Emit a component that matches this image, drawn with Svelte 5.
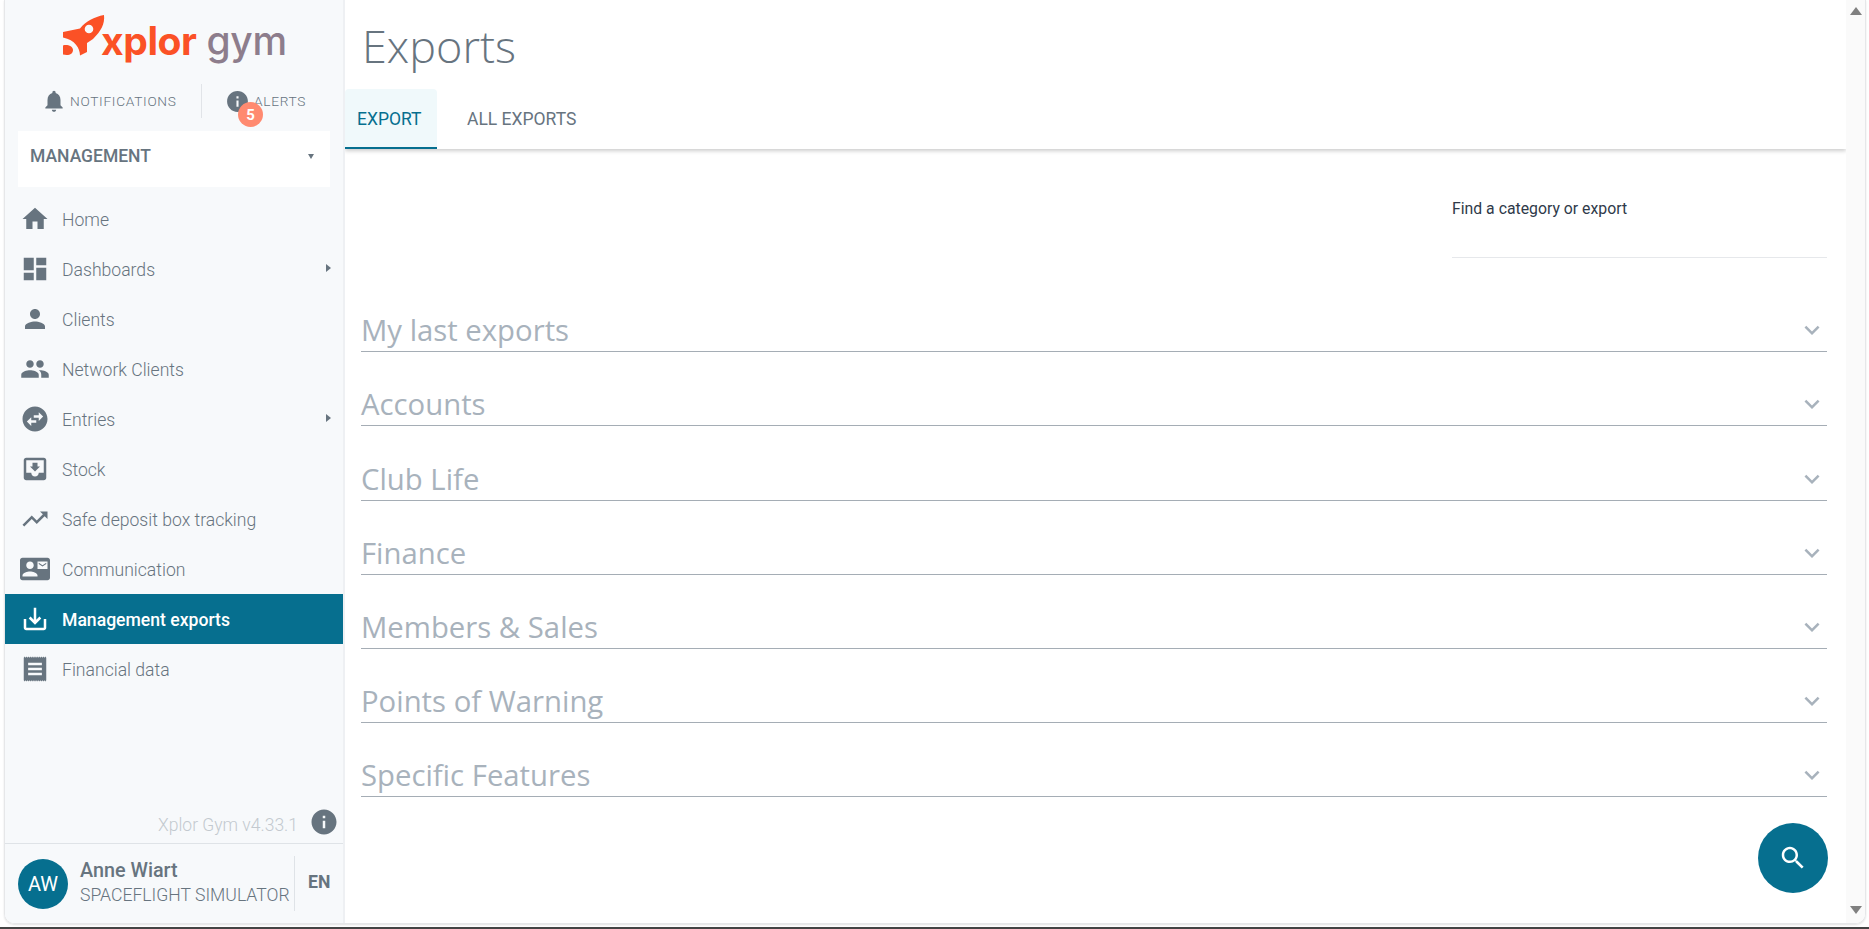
<script>
  let teeth = 'M3 3';
  for (let x = 3; x < 21; x += 1.5) teeth += `L${x + 0.75} 2L${x + 1.5} 3`;
  teeth += 'V21';
  for (let x = 21; x > 3; x -= 1.5) teeth += `L${x - 0.75} 22L${x - 1.5} 21`;
  teeth += 'ZM6.500 7v2h11V7zM6.500 11v2h11v-2zM6.500 15v2h11v-2z';

  const icons = {
    home: 'M10 20v-6h4v6h5v-8h3L12 3 2 12h3v8z',
    dash: 'M3 13h8V3H3v10zm0 8h8v-6H3v6zm10 0h8V11h-8v10zm0-18v6h8V3h-8z',
    person: 'M12 12c2.21 0 4-1.79 4-4s-1.79-4-4-4-4 1.79-4 4 1.79 4 4 4zm0 2c-2.67 0-8 1.34-8 4v2h16v-2c0-2.66-5.33-4-8-4z',
    people: 'M16 11c1.66 0 2.99-1.34 2.99-3S17.66 5 16 5c-1.66 0-3 1.34-3 3s1.34 3 3 3zm-8 0c1.66 0 2.99-1.34 2.99-3S9.66 5 8 5C6.34 5 5 6.34 5 8s1.34 3 3 3zm0 2c-2.33 0-7 1.17-7 3.5V19h14v-2.5c0-2.33-4.67-3.5-7-3.5zm8 0c-.29 0-.62.02-.97.05 1.16.84 1.97 1.97 1.97 3.45V19h6v-2.5c0-2.33-4.67-3.5-7-3.5z',
    swap: 'M22 12c0-5.52-4.48-10-10-10S2 6.48 2 12s4.48 10 10 10 10-4.48 10-10zm-7-5.5l3.5 3.5-3.5 3.5V11h-4V9h4V6.5zm-6 11L5.5 14 9 10.5V13h4v2H9v2.5z',
    inbox: 'M19 3H5c-1.1 0-2 .9-2 2v14c0 1.1.9 2 2 2h14c1.1 0 2-.9 2-2V5c0-1.1-.9-2-2-2zM19 15h-4c0 1.66-1.35 3-3 3s-3-1.34-3-3H5V5h14v10zM16 10h-2V7h-4v3H8l4 4 4-4z',
    trend: 'M16 6l2.29 2.29-4.88 4.88-4-4L2 16.59 3.41 18l6-6 4 4 6.3-6.29L22 12V6z',
    contact: 'M21 8V7l-3 2-3-2v1l3 2 3-2zm1-5H2C.9 3 0 3.9 0 5v14c0 1.1.9 2 2 2h20c1.1 0 1.99-.9 1.99-2L24 5c0-1.1-.9-2-2-2zM8 6c1.66 0 3 1.34 3 3s-1.34 3-3 3-3-1.34-3-3 1.34-3 3-3zm6 12H2v-1c0-2 4-3.1 6-3.1s6 1.1 6 3.1v1zm8-6h-8V6h8v6z',
    save: 'M19 12v7H5v-7H3v7c0 1.1.9 2 2 2h14c1.1 0 2-.9 2-2v-7h-2zm-6 .67l2.59-2.58L17 11.5l-5 5-5-5 1.41-1.41L11 12.67V3h2z',
    receipt: teeth
  };
  const nav = [
    { label: 'Home', icon: 'home' },
    { label: 'Dashboards', icon: 'dash', sub: true },
    { label: 'Clients', icon: 'person' },
    { label: 'Network Clients', icon: 'people' },
    { label: 'Entries', icon: 'swap', sub: true },
    { label: 'Stock', icon: 'inbox' },
    { label: 'Safe deposit box tracking', icon: 'trend' },
    { label: 'Communication', icon: 'contact' },
    { label: 'Management exports', icon: 'save', active: true },
    { label: 'Financial data', icon: 'receipt' }
  ];
  const sections = ['My last exports', 'Accounts', 'Club Life', 'Finance', 'Members & Sales', 'Points of Warning', 'Specific Features'];
  const info = 'M12 2C6.48 2 2 6.48 2 12s4.48 10 10 10 10-4.48 10-10S17.52 2 12 2zm1 15h-2v-6h2v6zm0-8h-2V7h2v2z';
</script>

<div class="window">
  <div class="frame">
    <aside class="side">
      <div class="logo">
        <svg class="rocket" viewBox="0 0 46 46" width="46" height="46" aria-hidden="true">
          <path fill-rule="evenodd" fill="#fb5126" d="M3 20L20 16.500C26 9 34 5 44 3C45 12 41 19 33 27L27 31L27 40L20 43.500C20 36 15 28 3 25.500ZM29 12.700A4.300 4.300 0 1 0 29 21.300A4.300 4.300 0 1 0 29 12.700Z"/>
          <path fill="#fb5126" d="M3 33.400C7 32 13 34 13 38C13 42 9 44 3 42.600Z"/>
        </svg>
        <span class="xplor">xplor</span><span class="gym">gym</span>
      </div>

      <div class="toprow">
        <div class="topitem notif">
          <svg viewBox="0 0 24 24" width="26" height="26"><path d="M12 22c1.1 0 2-.9 2-2h-4c0 1.100.89 2 2 2zm6-6v-5c0-3.070-1.640-5.640-4.500-6.320V4c0-.83-.67-1.500-1.500-1.500s-1.500.67-1.500 1.500v.68C7.630 5.360 6 7.920 6 11v5l-2 2v1h16v-1l-2-2z"/></svg>
          <span>NOTIFICATIONS</span>
        </div>
        <div class="topitem alerts">
          <svg viewBox="0 0 24 24" width="25" height="25"><path d={info}/></svg>
          <span>ALERTS</span>
          <b class="badge">5</b>
        </div>
      </div>

      <div class="select">
        <span>MANAGEMENT</span>
        <i class="caret"></i>
      </div>

      <nav>
        {#each nav as item}
          <div class="item" class:active={item.active}>
            <svg class="ico" viewBox="0 0 24 24" width="30" height="30"><path fill-rule="evenodd" d={icons[item.icon]}/></svg>
            <span>{item.label}</span>
            {#if item.sub}<i class="arrow"></i>{/if}
          </div>
        {/each}
      </nav>

      <div class="version">
        <span>Xplor Gym v4.33.1</span>
        <svg viewBox="0 0 24 24" width="30" height="30"><path d={info}/></svg>
      </div>

      <div class="user">
        <div class="avatar">AW</div>
        <div class="who">
          <div class="name">Anne Wiart</div>
          <div class="club">SPACEFLIGHT SIMULATOR</div>
        </div>
        <div class="lang">EN</div>
      </div>
    </aside>

    <main>
      <header>
        <h1>Exports</h1>
        <div class="tabs">
          <div class="tab on">EXPORT</div>
          <div class="tab">ALL EXPORTS</div>
        </div>
      </header>

      <div class="content">
        <div class="find">
          <div class="findbox">Find a category or export</div>
        </div>
        {#each sections as s}
          <div class="section">
            <span>{s}</span>
            <svg viewBox="0 0 24 24" width="30" height="30"><path d="M16.590 8.590L12 13.170 7.410 8.590 6 10l6 6 6-6z"/></svg>
          </div>
        {/each}
      </div>

      <button class="fab" aria-label="Search">
        <svg viewBox="0 0 24 24" width="30" height="30"><path d="M15.500 14h-.79l-.28-.27C15.410 12.590 16 11.110 16 9.500 16 5.910 13.090 3 9.500 3S3 5.910 3 9.500 5.910 16 9.500 16c1.610 0 3.090-.59 4.230-1.570l.27.28v.79l5 4.990L20.490 19l-4.990-5zm-6 0C7.010 14 5 11.990 5 9.500S7.010 5 9.500 5 14 7.010 14 9.500 11.990 14 9.500 14z"/></svg>
      </button>
    </main>

    <div class="scroll">
      <i class="up"></i>
      <i class="down"></i>
    </div>
  </div>
</div>

<style>
  :global(body) { margin: 0; background: #fff; font-family: Roboto, "Liberation Sans", sans-serif; overflow: hidden; }
  .window { height: 929px; box-sizing: border-box; padding: 0 3px 3px 4px; display: flex; border-bottom: 2px solid #444; }
  .frame { flex: 1; display: flex; min-width: 0; border: 1px solid #e6e7e9; border-top: 0; border-radius: 0 0 10px 10px; overflow: hidden; box-shadow: 0 1px 2px rgba(0,0,0,.12); }
  .side { width: 338px; flex: none; background: #f7f9fb; display: flex; flex-direction: column; border-right: 2px solid #eef0f3; color: #67747f; }
  .logo { height: 72px; display: flex; align-items: flex-start; padding: 12px 0 0 55px; box-sizing: border-box; font-family: Inter, sans-serif; font-size: 39px; line-height: 42px; letter-spacing: -.4px; }
  .rocket { margin-right: -5px; flex: none; }
  .xplor { color: #fb5126; font-weight: 700; margin-top: 8px; }
  .gym { color: #8d7d8c; font-weight: 500; margin: 8px 0 0 10px; }
  .toprow { display: flex; height: 34px; margin-top: 12px; align-items: center; font-size: 13.700px; font-weight: 300; letter-spacing: .7px; }
  .toprow svg { fill: #67747f; flex: none; }
  .topitem { display: flex; align-items: center; height: 34px; position: relative; }
  .notif { width: 197px; padding-left: 36px; box-sizing: border-box; gap: 3px; border-right: 1px solid #e1e4e8; }
  .alerts { padding-left: 23px; gap: 4px; }
  .badge { position: absolute; left: 36px; top: 18px; width: 25px; height: 25px; border-radius: 50%; background: #ff8a70; color: #fff; font-size: 15px; font-weight: 700; letter-spacing: 0; display: flex; align-items: center; justify-content: center; }
  .select { height: 56px; margin: 13px 13px 0 13px; background: #fff; display: flex; align-items: center; justify-content: space-between; padding: 0 16px 6px 12px; box-sizing: border-box; font-size: 17.500px; font-weight: 500; color: #67747f; }
  .caret { border: 3.500px solid transparent; border-top: 5px solid #67747f; border-bottom: 0; }
  nav { margin-top: 7px; flex: 1; }
  .item { height: 50px; display: flex; align-items: center; padding-left: 15px; font-size: 17.600px; font-weight: 300; color: #67747f; position: relative; }
  .item span { margin-left: 12px; padding-top: 2px; }
  .ico { fill: #67747f; flex: none; }
  .item.active { background: #066f8f; color: #fff; font-weight: 500; }
  .item.active .ico { fill: #fff; }
  .arrow { position: absolute; left: 321px; top: 20px; border: 4.500px solid transparent; border-left: 5px solid #67747f; border-right: 0; }
  .version { display: flex; align-items: center; justify-content: flex-end; height: 36px; padding-right: 4px; gap: 11px; font-size: 17.500px; font-weight: 300; color: #c3c9cf; }
  .version svg { fill: #67747f; margin-top: -6px; }
  .user { height: 80px; box-sizing: border-box; border-top: 1px solid #dfe3e7; display: flex; align-items: center; padding: 0 0 0 13px; }
  .avatar { width: 50px; height: 50px; flex: none; border-radius: 50%; background: #066f8f; color: #fff; display: flex; align-items: center; justify-content: center; font-size: 20px; }
  .who { margin-left: 12px; width: 215px; flex: none; white-space: nowrap; height: 55px; border-right: 1px solid #dfe3e7; box-sizing: border-box; }
  .name { font-size: 19.800px; font-weight: 500; line-height: 26px; margin-top: 2px; }
  .club { font-size: 17.600px; font-weight: 300; line-height: 22px; }
  .lang { margin-left: 13px; font-size: 17.600px; font-weight: 700; padding-bottom: 3px; }
  main { flex: 1; min-width: 0; background: #fff; position: relative; display: flex; flex-direction: column; overflow: hidden; }
  header { height: 149px; flex: none; box-shadow: 0 2px 4px rgba(0,0,0,.2); position: relative; display: flex; flex-direction: column; }
  h1 { margin: 0 0 0 17px; height: 89px; flex: none; font-family: "Open Sans", sans-serif; font-size: 45px; font-weight: 300; color: #67747f; line-height: 92px; }
  .tabs { display: flex; height: 60px; flex: none; font-size: 17.500px; color: #67747f; }
  .tab { padding: 0 30px; display: flex; align-items: center; box-sizing: border-box; }
  .tab.on { padding: 2px 12px 0; width: 92px; background: #f0f9fb; color: #066f8f; border-bottom: 2px solid #066f8f; border-radius: 4px 4px 0 0; }
  .content { padding: 0 19px 0 16px; flex: 1; }
  .find { display: flex; justify-content: flex-end; margin-bottom: 20px; }
  .findbox { width: 375px; height: 109px; box-sizing: border-box; border-bottom: 1px solid #e6e8eb; padding-top: 50px; font-size: 15.800px; color: #2f3a4a; line-height: 20px; }
  .section { height: 74.200px; box-sizing: border-box; border-bottom: 1px solid #a5adb5; display: flex; align-items: flex-end; justify-content: space-between; font-family: "Open Sans", sans-serif; font-size: 29.300px; color: #a8b2bc; line-height: 46px; }
  .section span { margin-bottom: -2px; }
  .section svg { fill: #a8b2bc; margin: 0 0 6px 0; }
  .fab { position: absolute; left: 1413px; top: 823px; width: 70px; height: 70px; border-radius: 50%; border: 0; background: #066f8f; padding: 0; display: flex; align-items: center; justify-content: center; }
  .fab svg { fill: #fff; }
  .scroll { width: 19px; flex: none; background: #fafafa; display: flex; flex-direction: column; justify-content: space-between; align-items: center; padding: 7px 0 9px; box-sizing: border-box; }
  .up { border: 6px solid transparent; border-bottom: 8px solid #808080; border-top: 0; }
  .down { border: 6px solid transparent; border-top: 8px solid #808080; border-bottom: 0; }
</style>
